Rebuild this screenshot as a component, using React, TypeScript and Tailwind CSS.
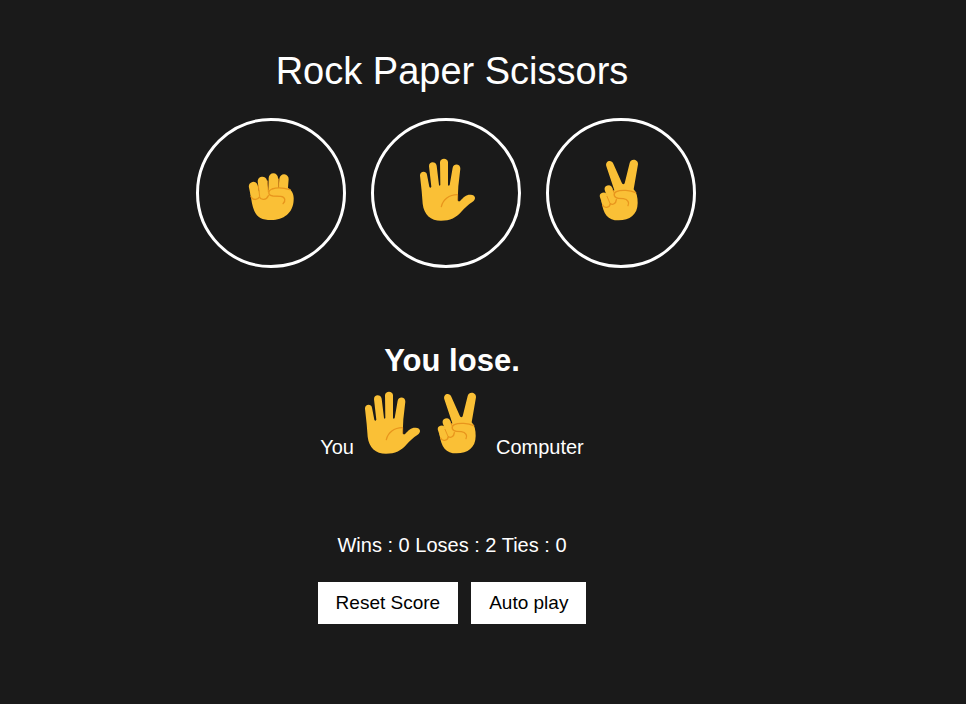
import { useState } from "react";
import type { ReactNode } from "react";

type Move = "rock" | "paper" | "scissors";

const SKIN = "#fac036";
const LINE = "#e8951d";

function Hand({ children }: { children: ReactNode }) {
  return (
    <svg
      viewBox="0 0 186 186"
      className="inline-block h-[62px] w-[62px] shrink-0 overflow-visible"
      fill="none"
      strokeLinecap="round"
      strokeLinejoin="round"
      aria-hidden="true"
    >
      {children}
    </svg>
  );
}

function Rock() {
  return (
    <Hand>
      <path d="M32 100L142 86C156 92 162 105 161 122C160 162 130 183 94 183C66 183 52 176 43 156C37 142 34 124 32 108Z" fill={SKIN} />
      <path d="M132 60L129 98" stroke={SKIN} strokeWidth="28" />
      <path d="M100 57L100 100" stroke={SKIN} strokeWidth="28" />
      <path d="M67 67L73 106" stroke={SKIN} strokeWidth="28" />
      <path d="M40 82L45 106" stroke={SKIN} strokeWidth="27" />
      <path d="M55 80L59 112M83 66L85 98M116 60L116 86" stroke={LINE} strokeWidth="3" />
      <path d="M33 113C38 124 53 124 58 114C63 124 79 124 85 110" stroke={LINE} strokeWidth="4" />
      <path d="M150 92C130 86 108 86 96 90C82 96 84 110 99 111L122 112C136 113 138 126 129 134" fill={SKIN} stroke={LINE} strokeWidth="4" />
    </Hand>
  );
}

function Paper() {
  return (
    <Hand>
      <path
        d="M15 50C14 36 34 34 36 47L43 83Q46 89 49 83L42 22C41 6 63 6 65 20L72 78Q74 82 76 78L75 10C75 -4 99 -4 99 10L99 78Q101 83 104 78L113 26C116 11 137 14 136 29L130 82L128 124Q131 130 136 125C146 114 154 106 167 107C182 108 185 120 172 129C160 137 149 147 139 158C125 175 105 185 78 185C47 185 27 167 23 134L20 96Z"
        fill={SKIN}
      />
      <path d="M79 143C84 122 102 107 127 107" stroke={LINE} strokeWidth="4" />
      <path d="M128 107L128 124" stroke={LINE} strokeWidth="2" />
    </Hand>
  );
}

function Scissors() {
  return (
    <Hand>
      <path
        d="M49 22C44 5 65 0 70 14L96 73Q100 79 104 73L119 12C123 -3 145 1 144 16L131 91C140 100 143 114 143 132C143 167 119 184 86 184C53 184 40 166 34 125L73 94Z"
        fill={SKIN}
      />
      <path d="M56 91L67 121" stroke={SKIN} strokeWidth="24" />
      <path d="M41 112L48 132" stroke={SKIN} strokeWidth="23" />
      <path d="M51 112L60 133" stroke={LINE} strokeWidth="3" />
      <path d="M68 92L73 102" stroke={LINE} strokeWidth="3" />
      <path d="M38 138C42 149 59 147 61 134C68 139 78 134 79 122" stroke={LINE} strokeWidth="4" />
      <path d="M137 101C121 94 94 91 79 98C67 105 73 117 86 118L100 119C114 121 119 132 114 140" fill={SKIN} stroke={LINE} strokeWidth="4" />
    </Hand>
  );
}

const moves: Move[] = ["rock", "paper", "scissors"];
const icons: Record<Move, () => ReactNode> = { rock: Rock, paper: Paper, scissors: Scissors };
const beats: Record<Move, Move> = { rock: "scissors", paper: "rock", scissors: "paper" };

export default function App() {
  const [round, setRound] = useState<{ you: Move; computer: Move }>({ you: "paper", computer: "scissors" });
  const [score, setScore] = useState({ wins: 0, loses: 2, ties: 0 });

  const play = (you: Move) => {
    const computer = moves[Math.floor(Math.random() * 3)];
    setRound({ you, computer });
    setScore((s) =>
      you === computer
        ? { ...s, ties: s.ties + 1 }
        : beats[you] === computer
          ? { ...s, wins: s.wins + 1 }
          : { ...s, loses: s.loses + 1 },
    );
  };

  const verdict =
    round.you === round.computer ? "Tie." : beats[round.you] === round.computer ? "You win." : "You lose.";
  const You = icons[round.you];
  const Computer = icons[round.computer];
  const plain = "h-[42px] cursor-pointer bg-white px-[18px] text-[19px] text-black";

  return (
    <main className="flex min-h-screen flex-col items-center bg-[#1a1a1a] pt-[49px] pr-[62px] font-['Liberation_Sans',Arial,sans-serif] text-xl text-white">
      <h1 className="text-[38px] leading-11">Rock Paper Scissors</h1>

      <div className="mt-[25px] mr-3 flex gap-[25px]">
        {moves.map((move) => {
          const Icon = icons[move];
          return (
            <button
              key={move}
              aria-label={move}
              onClick={() => play(move)}
              className="flex h-[150px] w-[150px] cursor-pointer items-center justify-center rounded-full border-3 border-white pb-[6px]"
            >
              <Icon />
            </button>
          );
        })}
      </div>

      <h2 className="mt-[75px] text-[31px] leading-9 font-bold">{verdict}</h2>
      <p className="mt-[13px] flex items-baseline gap-[6px]">
        <span>You</span>
        <You />
        <Computer />
        <span>Computer</span>
      </p>

      <p className="mt-[70px]">
        Wins : {score.wins} Loses : {score.loses} Ties : {score.ties}
      </p>

      <div className="mt-[23px] flex gap-[13px]">
        <button className={plain} onClick={() => setScore({ wins: 0, loses: 0, ties: 0 })}>
          Reset Score
        </button>
        <button className={plain} onClick={() => play(moves[Math.floor(Math.random() * 3)])}>
          Auto play
        </button>
      </div>
    </main>
  );
}
